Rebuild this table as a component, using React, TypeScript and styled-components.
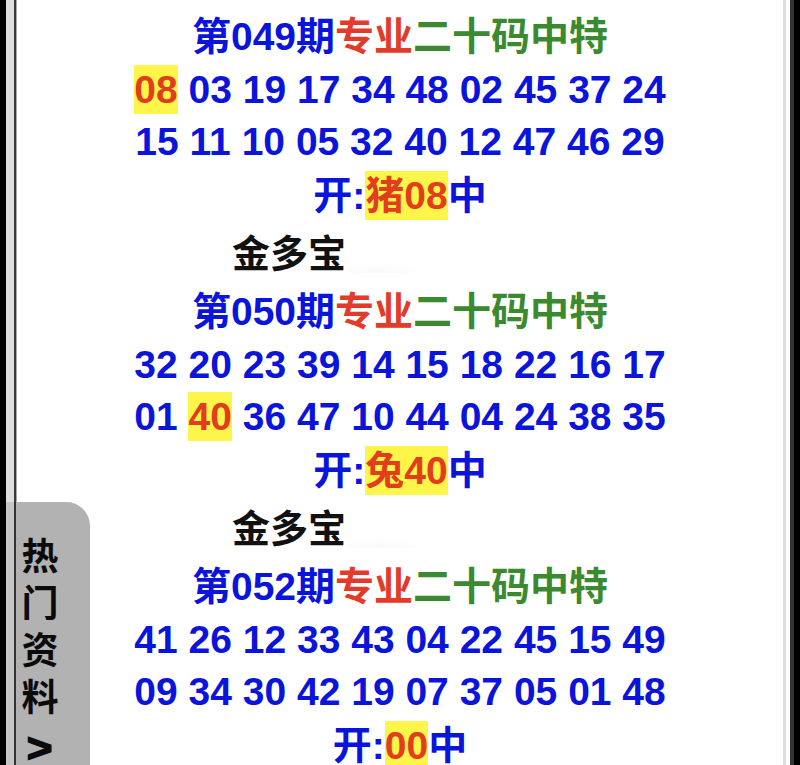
import React from "react";
import styled, { createGlobalStyle } from "styled-components";

const GlobalStyle = createGlobalStyle`
  html, body { margin: 0; padding: 0; background: #fff; overflow: hidden; }
  body { width: 800px; height: 765px; }
`;

const Frame = styled.div`
  position: relative;
  display: flex;
  width: 800px;
  height: 765px;
  overflow: hidden;
  background: #fff;
  font-family: "Liberation Sans", Arial, "Noto Sans CJK SC", sans-serif;
  font-weight: 700;
`;

const LeftRail = styled.div`
  flex: 0 0 17px;
  box-sizing: border-box;
  border-left: 6px solid #000;
  border-right: 1px solid #a8a8a8;
  background: #dedede;
  box-shadow: inset -2px 0 0 #3a3a3a;
`;

const RightRail = styled.div`
  flex: 0 0 17px;
  box-sizing: border-box;
  border-left: 3px solid #dcdcdc;
  border-right: 6px solid #000;
  background: #fff;
  box-shadow: inset -4px 0 0 #333;
`;

const Main = styled.main`
  flex: 1;
  min-width: 0;
  padding-top: 10px;
  text-align: center;
  color: #0a14da;
  font-size: 39px;
  white-space: nowrap;
`;

const TitleLine = styled.div`
  line-height: 54px;
`;

const NumberRow = styled.div`
  line-height: 52px;
`;

const ResultLine = styled.div`
  line-height: 56px;
`;

const SponsorLine = styled.div`
  line-height: 61px;
  font-size: 38px;
  color: #111;
`;

const Red = styled.span`
  color: #e23b2a;
`;

const Green = styled.span`
  color: #3b8a2f;
`;

const Hit = styled.span`
  display: inline-block;
  height: 49px;
  line-height: 49px;
  background: #fdf54a;
  color: #e23d1d;
`;

const Redacted = styled.span`
  display: inline-block;
  width: 222px;
  height: 30px;
  vertical-align: -6px;
  background: radial-gradient(ellipse at 15% 95%, rgba(0, 0, 0, 0.025), rgba(0, 0, 0, 0) 20%);
`;

const SideTab = styled.div`
  position: absolute;
  left: 6px;
  top: 502px;
  bottom: 0;
  width: 84px;
  box-sizing: border-box;
  border-left: 8px solid #c6c6c6;
  border-top-right-radius: 24px;
  background: #b2b2b2;
  box-shadow: inset 2px 0 0 #333;
  padding: 32px 0 0 7px;
`;

const TabColumn = styled.div`
  display: flex;
  flex-direction: column;
  align-items: center;
  width: 38px;
  color: #0b0b0b;
  font-size: 37px;
  line-height: 47px;
`;

const TabChar = styled.span`
  display: block;
`;

const TabArrow = styled.span`
  display: block;
  margin-top: 3px;
  font-size: 40px;
  -webkit-text-stroke: 1.5px #0b0b0b;
  transform: scaleX(1.1);
`;

type Block = {
  issue: string;
  rows: string[][];
  hit: string;
  result: { pre: string; hl: string };
};

const blocks: Block[] = [
  {
    issue: "049",
    rows: [
      ["08", "03", "19", "17", "34", "48", "02", "45", "37", "24"],
      ["15", "11", "10", "05", "32", "40", "12", "47", "46", "29"],
    ],
    hit: "08",
    result: { pre: "开:", hl: "猪08" },
  },
  {
    issue: "050",
    rows: [
      ["32", "20", "23", "39", "14", "15", "18", "22", "16", "17"],
      ["01", "40", "36", "47", "10", "44", "04", "24", "38", "35"],
    ],
    hit: "40",
    result: { pre: "开:", hl: "兔40" },
  },
  {
    issue: "052",
    rows: [
      ["41", "26", "12", "33", "43", "04", "22", "45", "15", "49"],
      ["09", "34", "30", "42", "19", "07", "37", "05", "01", "48"],
    ],
    hit: "",
    result: { pre: "开:", hl: "00" },
  },
];

const Numbers: React.FC<{ nums: string[]; hit: string }> = ({ nums, hit }) => (
  <NumberRow>
    {nums.map((n, i) => (
      <React.Fragment key={i}>
        {i > 0 && " "}
        {n === hit ? <Hit>{n}</Hit> : n}
      </React.Fragment>
    ))}
  </NumberRow>
);

const tabChars = ["热", "门", "资", "料"];

export default function App() {
  return (
    <>
      <GlobalStyle />
      <Frame>
        <LeftRail />
        <Main>
          {blocks.map((b, bi) => (
            <React.Fragment key={b.issue}>
              <TitleLine>
                第{b.issue}期<Red>专业</Red>
                <Green>二十码中特</Green>
              </TitleLine>
              {b.rows.map((r, ri) => (
                <Numbers key={ri} nums={r} hit={b.hit} />
              ))}
              <ResultLine>
                {b.result.pre}
                <Hit>{b.result.hl}</Hit>中
              </ResultLine>
              {bi < blocks.length - 1 && (
                <SponsorLine>
                  金多宝
                  <Redacted />
                </SponsorLine>
              )}
            </React.Fragment>
          ))}
        </Main>
        <RightRail />
        <SideTab>
          <TabColumn>
            {tabChars.map((c) => (
              <TabChar key={c}>{c}</TabChar>
            ))}
            <TabArrow>&gt;</TabArrow>
          </TabColumn>
        </SideTab>
      </Frame>
    </>
  );
}
